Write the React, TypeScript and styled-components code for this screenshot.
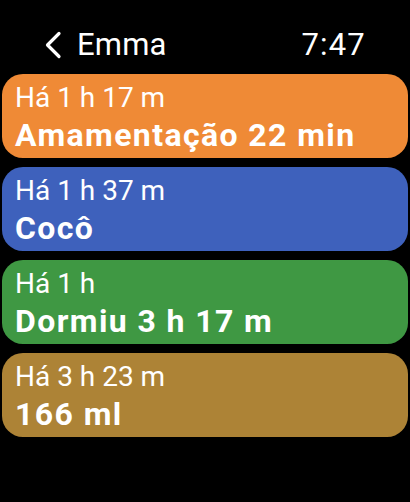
import React from 'react'
import styled, { createGlobalStyle } from 'styled-components'

const GlobalStyle = createGlobalStyle`
  html, body {
    margin: 0;
    padding: 0;
    background: #000;
  }
  body {
    font-family: Roboto, 'Noto Sans', 'Liberation Sans', sans-serif;
    color: #fff;
  }
`

const Screen = styled.div`
  width: 410px;
  height: 502px;
  background: #000;
  display: flex;
  flex-direction: column;
  box-sizing: border-box;
  padding: 0 2px;
`

const Header = styled.header`
  height: 66px;
  box-sizing: border-box;
  padding: 25px 42px 0 42px;
  display: flex;
  justify-content: space-between;
  align-items: flex-start;
  margin-bottom: 8px;
`

const BackButton = styled.div`
  display: flex;
  align-items: center;
  gap: 15px;
  height: 40px;
`

const HeaderText = styled.span<{ $spacing?: number }>`
  font-size: 31px;
  line-height: 40px;
  font-weight: 400;
  letter-spacing: ${(p) => p.$spacing ?? 0.2}px;
`

const List = styled.div`
  display: flex;
  flex-direction: column;
  gap: 9px;
`

const Card = styled.div<{ $bg: string }>`
  height: 84px;
  box-sizing: border-box;
  padding: 6px 13px 0 13px;
  border-radius: 21px;
  background: ${(p) => p.$bg};
  display: flex;
  flex-direction: column;
`

const Ago = styled.div`
  font-size: 28px;
  line-height: 36px;
  font-weight: 400;
`

const Title = styled.div`
  font-size: 32px;
  line-height: 38px;
  font-weight: 700;
  letter-spacing: 1.4px;
  white-space: nowrap;
`

const events = [
  { ago: 'Há 1 h 17 m', title: 'Amamentação 22 min', color: '#ef8a36' },
  { ago: 'Há 1 h 37 m', title: 'Cocô', color: '#3e61bc' },
  { ago: 'Há 1 h', title: 'Dormiu 3 h 17 m', color: '#3f9843' },
  { ago: 'Há 3 h 23 m', title: '166 ml', color: '#ad8336' },
]

const Chevron = () => (
  <svg width="18" height="28" viewBox="0 0 18 28">
    <path
      d="M15 2.5 L3.5 14 L15 25.5"
      fill="none"
      stroke="#fff"
      strokeWidth="3.2"
      strokeLinecap="round"
      strokeLinejoin="round"
    />
  </svg>
)

export default function App() {
  return (
    <>
      <GlobalStyle />
      <Screen>
        <Header>
          <BackButton>
            <Chevron />
            <HeaderText>Emma</HeaderText>
          </BackButton>
          <HeaderText $spacing={1.2}>7:47</HeaderText>
        </Header>
        <List>
          {events.map((e) => (
            <Card key={e.title} $bg={e.color}>
              <Ago>{e.ago}</Ago>
              <Title>{e.title}</Title>
            </Card>
          ))}
        </List>
      </Screen>
    </>
  )
}
